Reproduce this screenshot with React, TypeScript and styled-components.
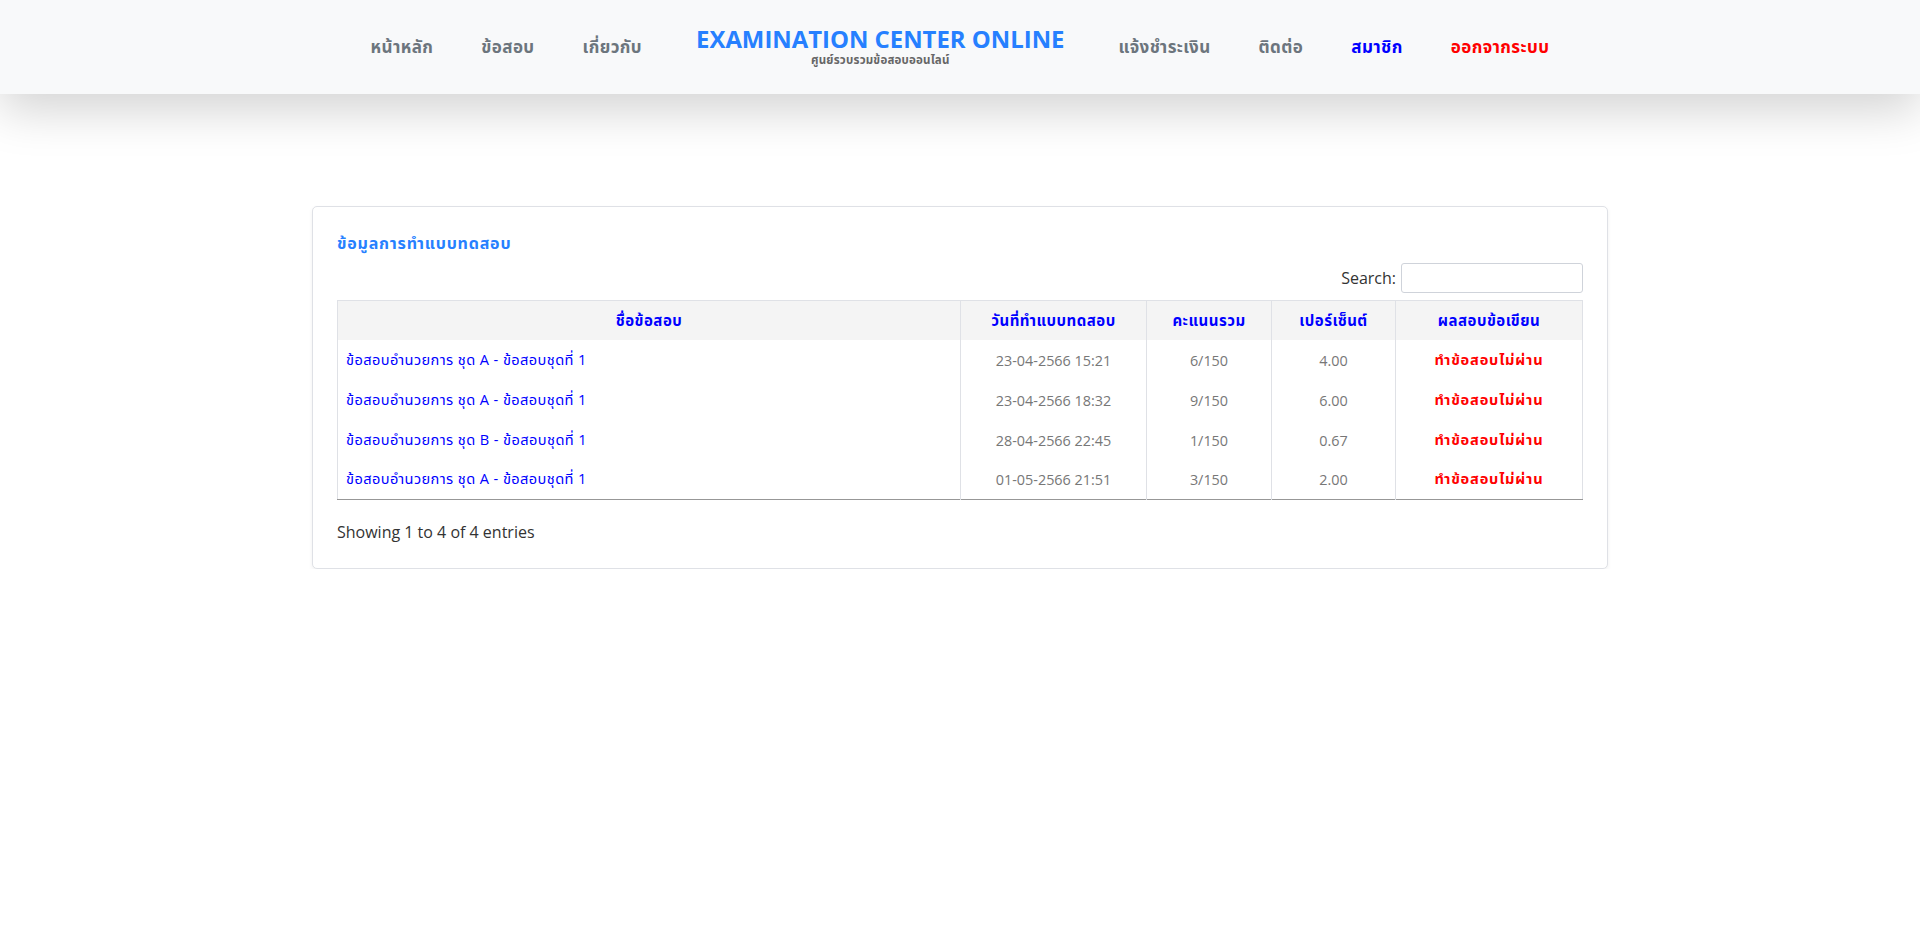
import React from "react";
import styled, { createGlobalStyle } from "styled-components";

const GlobalStyle = createGlobalStyle`
  html, body {
    margin: 0;
    padding: 0;
    background: #ffffff;
    font-family: "Open Sans", "Noto Sans Thai", "Noto Sans", sans-serif;
    color: #333333;
  }
  * { box-sizing: border-box; }
`;

const Header = styled.header`
  height: 94px;
  background: #f8f9fa;
  box-shadow: 0 1rem 3rem rgba(0, 0, 0, 0.175);
  display: flex;
  align-items: center;
  justify-content: center;
  position: relative;
  z-index: 2;
`;

const Nav = styled.nav`
  display: flex;
  align-items: center;
  justify-content: center;
`;

const NavLink = styled.a<{ $tone?: "gray" | "blue" | "red" }>`
  padding: 0 24px;
  font-size: 17px;
  letter-spacing: 0.4px;
  font-weight: 700;
  line-height: 24px;
  text-decoration: none;
  cursor: pointer;
  color: ${(p) =>
    p.$tone === "blue" ? "#0000ff" : p.$tone === "red" ? "#ff0000" : "#6c757d"};
`;

const Brand = styled.a`
  display: flex;
  flex-direction: column;
  align-items: center;
  margin: 0 30px;
  text-decoration: none;
`;

const BrandTitle = styled.span`
  font-size: 23.9px;
  font-weight: 700;
  color: #2680ff;
  line-height: 26px;
`;

const BrandSub = styled.span`
  font-size: 11.5px;
  font-weight: 700;
  color: #666666;
  line-height: 16px;
  letter-spacing: 0.2px;
`;

const Main = styled.main`
  width: 1296px;
  margin: 112px auto 0;
`;

const Card = styled.section`
  background: #ffffff;
  border: 1px solid #dfe1e6;
  border-radius: 5px;
  box-shadow: 0 2px 4px rgba(0, 0, 0, 0.06);
  padding: 24px;
`;

const CardTitle = styled.h5`
  margin: 0;
  font-size: 16px;
  letter-spacing: 0.8px;
  font-weight: 700;
  line-height: 24px;
  color: #2680ff;
`;

const SearchRow = styled.div`
  display: flex;
  justify-content: flex-end;
  align-items: center;
  margin-top: 8px;
  height: 30px;
`;

const SearchLabel = styled.label`
  font-size: 16px;
  color: #333333;
  display: flex;
  align-items: center;
  gap: 5px;
`;

const SearchInput = styled.input`
  width: 182px;
  height: 30px;
  border: 1px solid #cfd3da;
  border-radius: 3px;
  padding: 4px 8px;
  font-family: inherit;
  font-size: 14px;
  outline: none;
`;

const Table = styled.table`
  width: 100%;
  margin-top: 7px;
  border-collapse: collapse;
  border-left: 1px solid #dfe1e6;
  border-right: 1px solid #dfe1e6;
  border-bottom: 1px solid #979797;
  table-layout: fixed;
`;

const Col = styled.col<{ $w: number }>`
  width: ${(p) => p.$w}px;
`;

const HeadCell = styled.th`
  background: #f4f4f4;
  border-top: 1px solid #dfe1e6;
  border-left: 1px solid #dfe1e6;
  height: 39px;
  padding: 3px 10px 0;
  font-size: 15px;
  letter-spacing: 0.5px;
  font-weight: 700;
  color: #0000ff;
  text-align: center;
  &:first-child { border-left: none; }
`;

const Cell = styled.td<{ $kind?: "name" | "num" | "fail" }>`
  height: 40px;
  padding: 1px 8px 0;
  border-left: 1px solid #dfe1e6;
  font-size: ${(p) => (p.$kind === "num" ? "14.4px" : "14.6px")};
  letter-spacing: ${(p) =>
    p.$kind === "num" ? "0" : p.$kind === "fail" ? "0.8px" : "0.4px"};
  font-weight: ${(p) => (p.$kind === "fail" ? 700 : 400)};
  color: ${(p) =>
    p.$kind === "name" ? "#0000ff" : p.$kind === "fail" ? "#ff0000" : "#777777"};
  text-align: ${(p) => (p.$kind === "name" ? "left" : "center")};
  &:first-child { border-left: none; }
`;

const Footer = styled.div`
  margin-top: 20px;
  font-size: 16px;
  line-height: 24px;
  color: #333333;
`;

const rows = [
  { name: "ข้อสอบอำนวยการ ชุด A - ข้อสอบชุดที่ 1", date: "23-04-2566 15:21", score: "6/150", pct: "4.00" },
  { name: "ข้อสอบอำนวยการ ชุด A - ข้อสอบชุดที่ 1", date: "23-04-2566 18:32", score: "9/150", pct: "6.00" },
  { name: "ข้อสอบอำนวยการ ชุด B - ข้อสอบชุดที่ 1", date: "28-04-2566 22:45", score: "1/150", pct: "0.67" },
  { name: "ข้อสอบอำนวยการ ชุด A - ข้อสอบชุดที่ 1", date: "01-05-2566 21:51", score: "3/150", pct: "2.00" },
];

export default function App() {
  return (
    <>
      <GlobalStyle />
      <Header>
        <Nav>
          <NavLink>หน้าหลัก</NavLink>
          <NavLink>ข้อสอบ</NavLink>
          <NavLink>เกี่ยวกับ</NavLink>
          <Brand>
            <BrandTitle>EXAMINATION CENTER ONLINE</BrandTitle>
            <BrandSub>ศูนย์รวบรวมข้อสอบออนไลน์</BrandSub>
          </Brand>
          <NavLink>แจ้งชำระเงิน</NavLink>
          <NavLink>ติดต่อ</NavLink>
          <NavLink $tone="blue">สมาชิก</NavLink>
          <NavLink $tone="red">ออกจากระบบ</NavLink>
        </Nav>
      </Header>
      <Main>
        <Card>
          <CardTitle>ข้อมูลการทำแบบทดสอบ</CardTitle>
          <SearchRow>
            <SearchLabel>
              Search:
              <SearchInput type="search" />
            </SearchLabel>
          </SearchRow>
          <Table>
            <colgroup>
              <Col $w={623} />
              <Col $w={186} />
              <Col $w={125} />
              <Col $w={124} />
              <Col $w={187} />
            </colgroup>
            <thead>
              <tr>
                <HeadCell>ชื่อข้อสอบ</HeadCell>
                <HeadCell>วันที่ทำแบบทดสอบ</HeadCell>
                <HeadCell>คะแนนรวม</HeadCell>
                <HeadCell>เปอร์เซ็นต์</HeadCell>
                <HeadCell>ผลสอบข้อเขียน</HeadCell>
              </tr>
            </thead>
            <tbody>
              {rows.map((r, i) => (
                <tr key={i}>
                  <Cell $kind="name">{r.name}</Cell>
                  <Cell $kind="num">{r.date}</Cell>
                  <Cell $kind="num">{r.score}</Cell>
                  <Cell $kind="num">{r.pct}</Cell>
                  <Cell $kind="fail">ทำข้อสอบไม่ผ่าน</Cell>
                </tr>
              ))}
            </tbody>
          </Table>
          <Footer>Showing 1 to 4 of 4 entries</Footer>
        </Card>
      </Main>
    </>
  );
}
